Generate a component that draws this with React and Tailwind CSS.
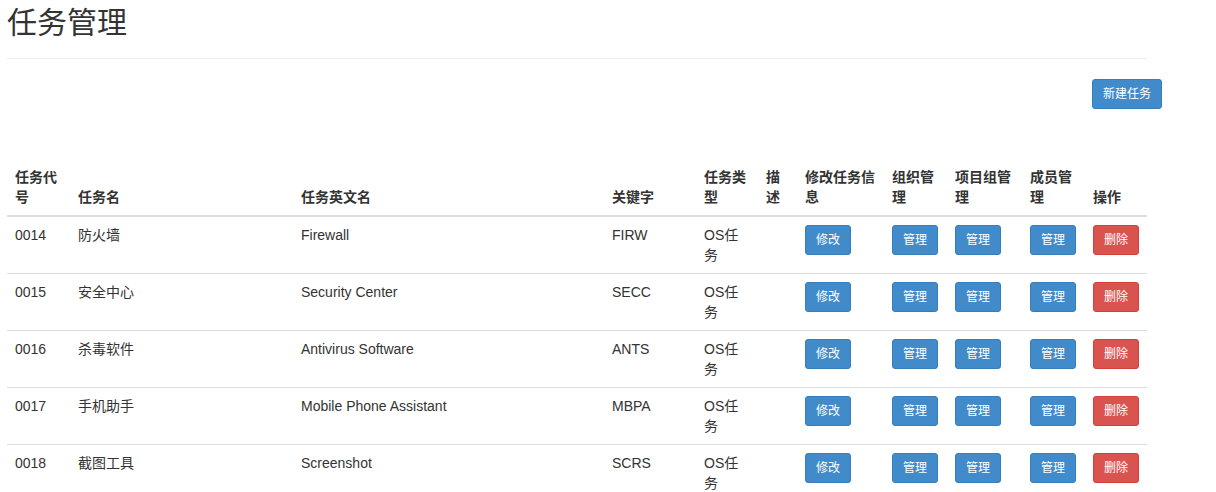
import React from 'react';

const tasks = [
  { code: '0014', name: '防火墙', en: 'Firewall', key: 'FIRW' },
  { code: '0015', name: '安全中心', en: 'Security Center', key: 'SECC' },
  { code: '0016', name: '杀毒软件', en: 'Antivirus Software', key: 'ANTS' },
  { code: '0017', name: '手机助手', en: 'Mobile Phone Assistant', key: 'MBPA' },
  { code: '0018', name: '截图工具', en: 'Screenshot', key: 'SCRS' },
];

const columns = [
  { label: '任务代号', w: 'w-[63px]' },
  { label: '任务名', w: 'w-[223px]' },
  { label: '任务英文名', w: 'w-[311px]' },
  { label: '关键字', w: 'w-[92px]' },
  { label: '任务类型', w: 'w-[62px]' },
  { label: '描述', w: 'w-[39px]' },
  { label: '修改任务信息', w: 'w-[87px]' },
  { label: '组织管理', w: 'w-[63px]' },
  { label: '项目组管理', w: 'w-[75px]' },
  { label: '成员管理', w: 'w-[63px]' },
  { label: '操作', w: 'w-[62px]' },
];

const Btn = ({ danger, children }) => (
  <button
    className={
      danger
        ? 'px-[10px] py-[5px] text-xs leading-[18px] text-white rounded-[3px] border border-[#d43f3a] bg-[#d9534f]'
        : 'px-[10px] py-[5px] text-xs leading-[18px] text-white rounded-[3px] border border-[#357ebd] bg-[#428bca]'
    }
  >
    {children}
  </button>
);

const td = 'p-2 align-top border-t border-[#ddd]';

export default function App() {
  return (
    <div
      className="px-[7px] w-[1154px] text-sm leading-5 text-[#333]"
      style={{ fontFamily: '"Liberation Sans", Arial, "Noto Sans CJK SC", sans-serif' }}
    >
      <div className="pt-[1px] pb-[9px] border-b border-[#eee]">
        <h2 className="text-[30px] leading-[33px] font-normal mt-[5px] mb-[10px]">任务管理</h2>
      </div>
      <div className="flex justify-end mt-[20px] -mr-[15px]">
        <Btn>新建任务</Btn>
      </div>
      <table className="table-fixed w-[1140px] mt-[50px] border-collapse">
        <thead>
          <tr>
            {columns.map((c) => (
              <th key={c.label} className={`${c.w} p-2 text-left align-bottom font-bold border-b-2 border-[#ddd]`}>
                {c.label}
              </th>
            ))}
          </tr>
        </thead>
        <tbody>
          {tasks.map((t) => (
            <tr key={t.code}>
              <td className={td}>{t.code}</td>
              <td className={td}>{t.name}</td>
              <td className={td}>{t.en}</td>
              <td className={td}>{t.key}</td>
              <td className={td}>OS任务</td>
              <td className={td}></td>
              <td className={td}><Btn>修改</Btn></td>
              <td className={td}><Btn>管理</Btn></td>
              <td className={td}><Btn>管理</Btn></td>
              <td className={td}><Btn>管理</Btn></td>
              <td className={td}><Btn danger>删除</Btn></td>
            </tr>
          ))}
        </tbody>
      </table>
    </div>
  );
}
